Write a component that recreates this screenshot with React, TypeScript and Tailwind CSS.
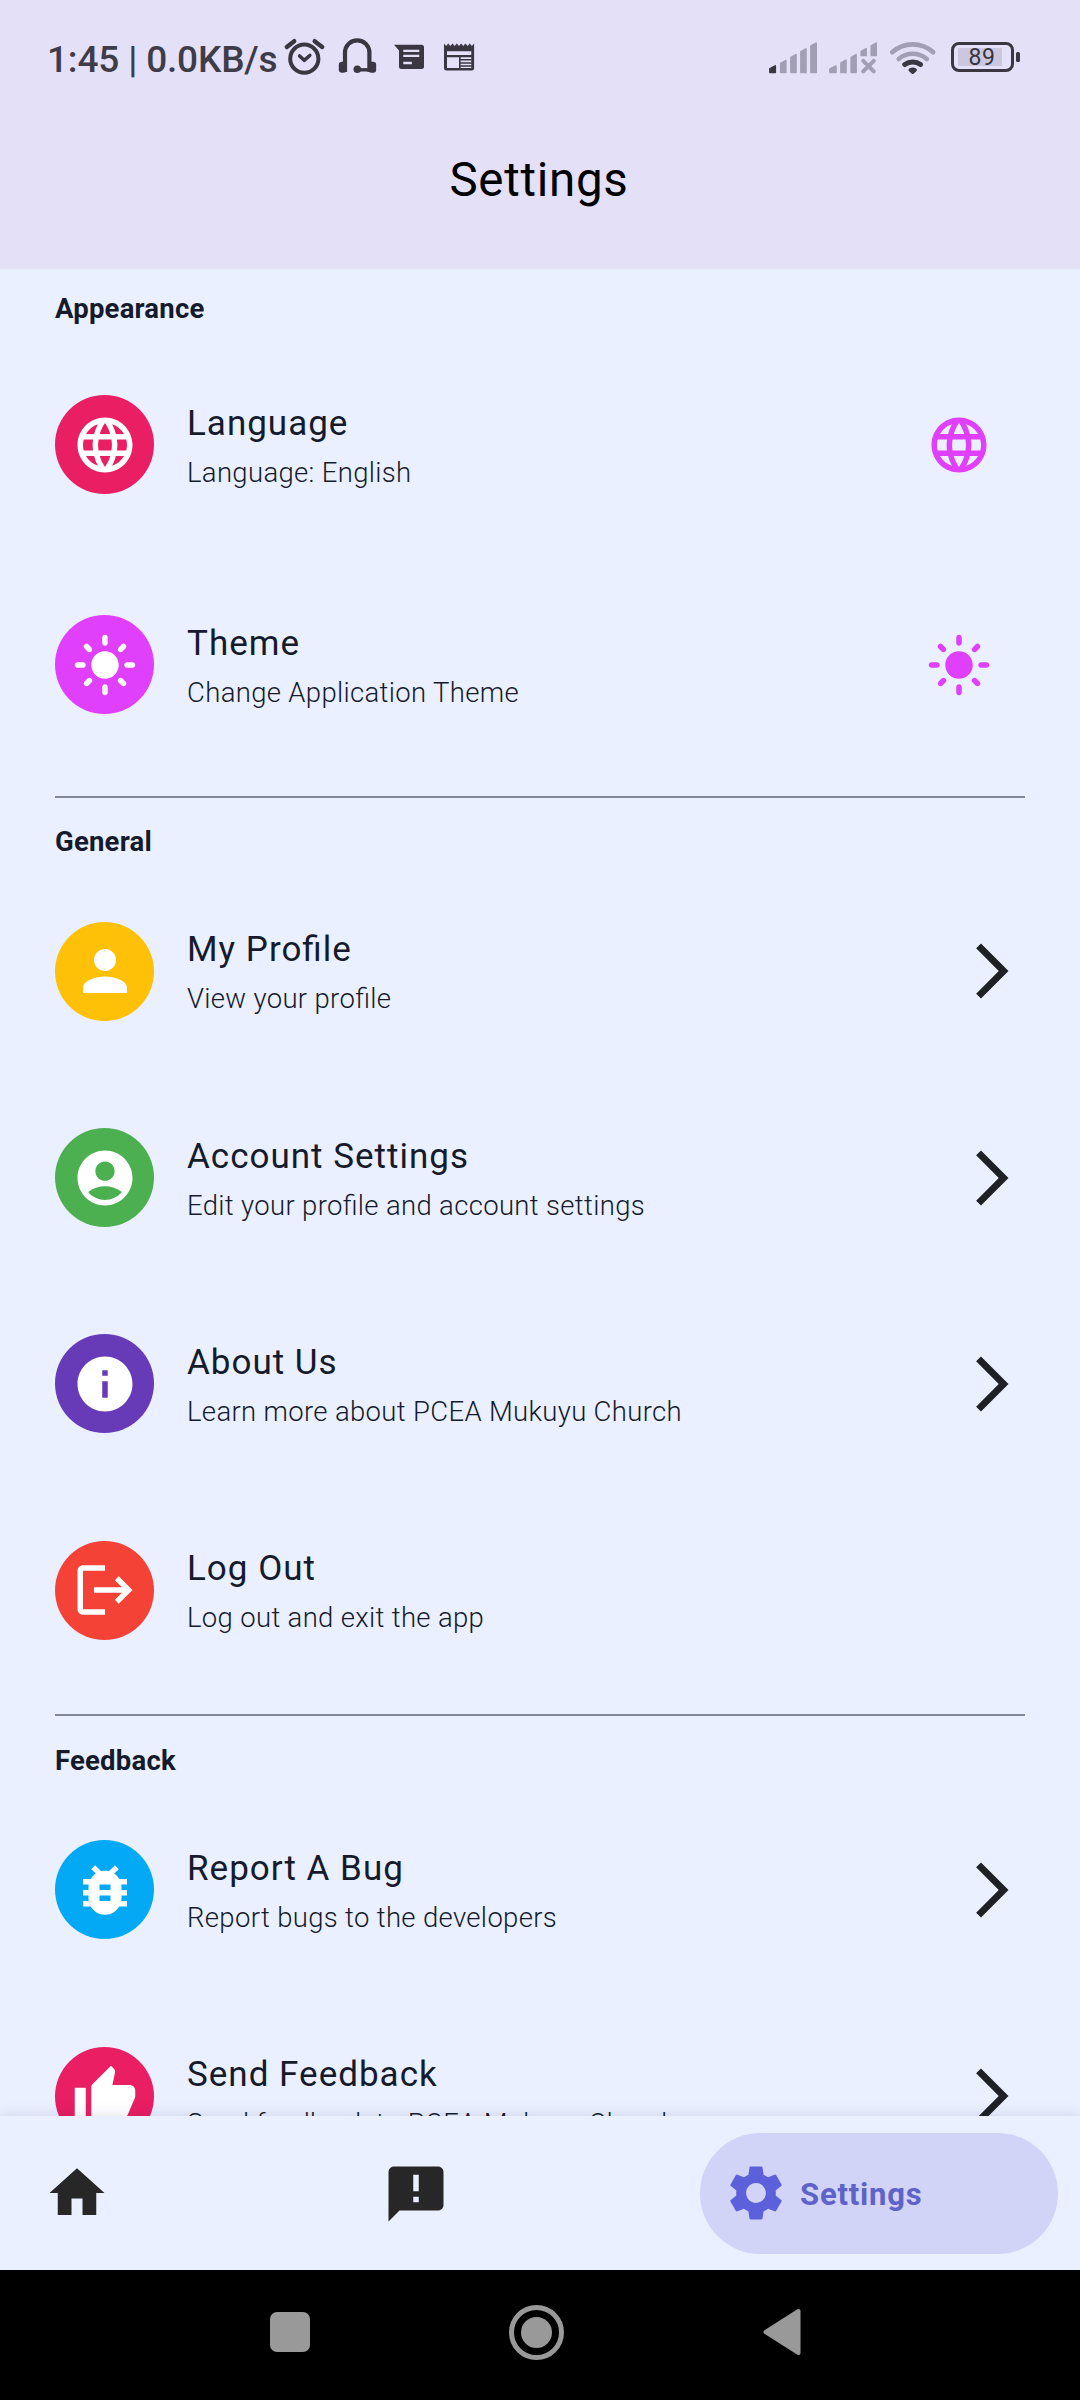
import type { ReactNode } from 'react';
import {
  MdArrowForwardIos,
  MdBugReport,
  MdHome,
  MdInfo,
  MdLanguage,
  MdLightMode,
  MdLogout,
  MdPerson,
  MdSettings,
  MdThumbUp,
} from 'react-icons/md';

const INK = '#3a3743';
const MUTED = '#a29fb4';

function AccountCircle() {
  return (
    <svg viewBox="0 0 24 24" className="size-[66px]" fill="currentColor">
      <path d="M12 2C6.48 2 2 6.48 2 12s4.480 10 10 10 10-4.480 10-10S17.520 2 12 2zm0 4c1.930 0 3.500 1.570 3.500 3.500S13.930 13 12 13s-3.500-1.570-3.500-3.500S10.070 6 12 6zm0 14c-2.030 0-4.430-.820-6.140-2.880a9.947 9.947 0 0 1 12.280 0C16.430 19.180 14.030 20 12 20z" />
    </svg>
  );
}

function Announcement() {
  return (
    <svg viewBox="0 0 24 24" className="size-[66px]" fill="currentColor">
      <path d="M20 2H4c-1.1 0-1.990.9-1.990 2L2 22l4-4h14c1.1 0 2-.9 2-2V4c0-1.1-.9-2-2-2zm-7 9h-2V5h2v6zm0 4h-2v-2h2v2z" />
    </svg>
  );
}

function AlarmIcon() {
  return (
    <svg viewBox="281 38 49 44" className="h-[44px] w-[49px]" fill="none" stroke={INK} strokeLinecap="round" strokeLinejoin="round">
      <circle cx="304.3" cy="58.7" r="14.1" strokeWidth="4" />
      <path d="M286.800 47 294.200 41.200M314.700 41.200 322.200 47" strokeWidth="4.400" />
      <path d="M299.600 56 304.200 60.300 309.800 55.500" strokeWidth="3.6" />
    </svg>
  );
}

function HeadsetIcon() {
  return (
    <svg viewBox="330 38 56 44" className="h-[44px] w-[56px]" fill="none" stroke={INK}>
      <path d="M345 72V52.500a12.200 12.200 0 0 1 24.400 0V72" strokeWidth="4.200" />
      <rect x="338.800" y="61.800" width="7.600" height="11" rx="3.200" fill={INK} stroke="none" />
      <rect x="368.200" y="61.800" width="8" height="11" rx="3.200" fill={INK} stroke="none" />
      <path d="M357 69.800h14" strokeWidth="3.400" />
      <circle cx="357.300" cy="69.300" r="3.800" fill={INK} stroke="none" />
    </svg>
  );
}

function MessageIcon() {
  return (
    <svg viewBox="386 38 48 44" className="h-[44px] w-[48px]">
      <path d="M394 44.700h27.500a2.500 2.500 0 0 1 2.500 2.500v19.300a2.500 2.500 0 0 1-2.500 2.500h-20a2.500 2.500 0 0 1-2.500-2.500V50.500z" fill={INK} />
      <path d="M403.300 50.800h16M403.300 55.800h16M403.300 63h8.600" stroke="#e4e0f7" strokeWidth="2.300" />
    </svg>
  );
}

function NewsIcon() {
  return (
    <svg viewBox="434 38 48 44" className="h-[44px] w-[48px]">
      <path
        d="M444 43.500l2.100 2.600 2.100-2.600 2.200 2.600 2.100-2.600 2.200 2.600 2.100-2.600 2.200 2.600 2.100-2.600 2.200 2.600 2.100-2.600 2.200 2.600 2.100-2.600 2.200 2.600 2.200-2.600V68a2.500 2.500 0 0 1-2.500 2.500h-25A2.500 2.500 0 0 1 444 68z"
        fill={INK}
      />
      <path d="M447 51.300h24.300v3.800H447zM447 57.300h12v10.600h-12zM460.600 57.300h10.700v1.700h-10.700zM460.600 60.600h10.700v1.600h-10.700zM460.600 63.700h10.700v1.500h-10.700zM460.600 66.700h10.700v1.300h-10.700z" fill="#e4e0f7" />
    </svg>
  );
}

function SignalIcon() {
  return (
    <svg viewBox="767 38 56 44" className="h-[44px] w-[56px]" strokeLinejoin="round" strokeWidth="1.8">
      <path d="M770 72.300v-3.500l5.200-2.800v6.300z" fill={INK} stroke={INK} />
      <g fill={MUTED} stroke={MUTED}>
        <path d="M780.800 72.300V63.500l4.900-2.700v11.500zM791 72.300V57.500l4.900-2.700v17.500zM801 72.300V51.700l4.900-2.700v23.300zM811 72.300V46l5.100-2.700v29z" />
      </g>
    </svg>
  );
}

function NoSignalIcon() {
  return (
    <svg viewBox="823 38 62 44" className="h-[44px] w-[62px]" fill={MUTED} stroke={MUTED} strokeLinejoin="round" strokeWidth="1.8">
      <path d="M830 72.300v-3.200l5.900-3v6.200zM841 72.300V63l4.900-2.700v12zM851.300 72.300V57.500l4.700-2.700v17.500zM861.300 55.400v-3.900l4.800-2.700v6.600zM871.300 55.400V46l4.800-2.700v12.100z" />
      <path d="M863.200 60.800 873.800 71.300M873.800 60.800 863.200 71.300" strokeWidth="4" strokeLinecap="round" />
    </svg>
  );
}

function WifiIcon() {
  return (
    <svg viewBox="885 38 66 44" className="h-[44px] w-[66px]" fill="none" strokeLinecap="round" strokeWidth="4.6">
      <path d="M892.200 52.300a30.500 30.500 0 0 1 41 0" stroke={MUTED} />
      <path d="M898.700 59a21.500 21.500 0 0 1 28 0" stroke={MUTED} />
      <path d="M904.800 64.600a13 13 0 0 1 15.800 0" stroke={INK} strokeWidth="5" />
      <path d="M910.200 70q2.500-1.600 5 0l-2.500 2.300z" fill={INK} stroke={INK} strokeWidth="3.400" strokeLinejoin="round" />
    </svg>
  );
}

function Battery() {
  return (
    <div className="flex h-[30px] items-center gap-[2px]">
      <div className="flex h-[30px] w-[63px] items-center rounded-[8px] border-[3px] border-[#3a3743] pl-[4px]">
        <div className="flex h-[18px] w-[44px] items-center justify-center bg-[#cbc7df] text-[23px] leading-[26px] tracking-[0.5px] text-[#37343f]">
          <span className="relative top-[1px] pl-[4px]">89</span>
        </div>
      </div>
      <div className="h-[10px] w-[4px] rounded-[1.500px] bg-[#3a3743]" />
    </div>
  );
}

function StatusBar() {
  return (
    <div className="flex h-[82px] items-start pt-[38px] pl-[47px]">
      <div className="w-[234px] text-[37px] leading-[44px] font-medium tracking-[-0.18px] whitespace-nowrap text-[#3f3c49]">
        1:45 | 0.0KB/s
      </div>
      <AlarmIcon />
      <HeadsetIcon />
      <MessageIcon />
      <NewsIcon />
      <div className="w-[285px]" />
      <SignalIcon />
      <NoSignalIcon />
      <WifiIcon />
      <div className="pt-[4px]">
        <Battery />
      </div>
    </div>
  );
}

type RowProps = {
  color: string;
  icon: ReactNode;
  title: string;
  subtitle: string;
  trailing?: ReactNode;
  height?: string;
};

function Row({ color, icon, title, subtitle, trailing, height = 'h-[206.25px]' }: RowProps) {
  return (
    <div className={`flex shrink-0 items-center ${height}`}>
      <div className={`flex size-[99px] items-center justify-center rounded-full text-white ${color}`}>{icon}</div>
      <div className="ml-[33px] h-[99px] flex-1 pt-[6.5px] whitespace-nowrap text-[#151b2c] [font-feature-settings:'liga'_1]">
        <div className="text-[35px] leading-[44px] tracking-[1px]">{title}</div>
        <div className="mt-[5px] text-[27.5px] leading-[44px] font-light tracking-[0.33px]">{subtitle}</div>
      </div>
      {trailing}
    </div>
  );
}

function Heading({ children }: { children: ReactNode }) {
  return (
    <div className="mb-[4px] shrink-0 text-[27.5px] leading-[44px] font-bold tracking-[0.2px] text-[#151b2c]">{children}</div>
  );
}

function Divider() {
  return <div className="mt-[21px] mb-[22.5px] h-[2px] shrink-0 bg-[#7f8799]" />;
}

const chevron = <MdArrowForwardIos className="size-[66px] text-[#1d2124]" />;

export default function App() {
  return (
    <div className="flex h-[2400px] w-[1080px] flex-col overflow-hidden bg-[#eaf0ff] font-['Roboto',sans-serif]">
      <header className="h-[269px] shrink-0 bg-[#e4e0f7]">
        <StatusBar />
        <h1 className="pt-[68px] pr-[2px] text-center text-[47.5px] leading-[60px] tracking-[0.7px] text-black">Settings</h1>
      </header>

      <main className="flex h-[1847px] shrink-0 flex-col overflow-hidden px-[55px] pt-[17.75px]">
        <Heading>Appearance</Heading>
        <Row
          height="h-[220px]"
          color="bg-[#e91e63]"
          icon={<MdLanguage className="size-[66px]" />}
          title="Language"
          subtitle="Language: English"
          trailing={<MdLanguage className="mr-[33px] size-[66px] text-[#e040fb]" />}
        />
        <Row
          height="h-[220px]"
          color="bg-[#e040fb]"
          icon={<MdLightMode className="size-[66px]" />}
          title="Theme"
          subtitle="Change Application Theme"
          trailing={<MdLightMode className="mr-[33px] size-[66px] text-[#e040fb]" />}
        />
        <Divider />
        <Heading>General</Heading>
        <Row color="bg-[#ffc107]" icon={<MdPerson className="size-[66px]" />} title="My Profile" subtitle="View your profile" trailing={chevron} />
        <Row color="bg-[#4caf50]" icon={<AccountCircle />} title="Account Settings" subtitle="Edit your profile and account settings" trailing={chevron} />
        <Row color="bg-[#673ab7]" icon={<MdInfo className="size-[66px]" />} title="About Us" subtitle="Learn more about PCEA Mukuyu Church" trailing={chevron} />
        <Row color="bg-[#f44336]" icon={<MdLogout className="size-[66px]" />} title="Log Out" subtitle="Log out and exit the app" />
        <Divider />
        <Heading>Feedback</Heading>
        <Row color="bg-[#03a9f4]" icon={<MdBugReport className="size-[66px]" />} title="Report A Bug" subtitle="Report bugs to the developers" trailing={chevron} />
        <Row color="bg-[#e91e63]" icon={<MdThumbUp className="size-[66px]" />} title="Send Feedback" subtitle="Send feedback to PCEA Mukuyu Church" trailing={chevron} />
      </main>

      <nav className="relative flex h-[154px] shrink-0 items-center justify-between bg-[#eaf0ff] pr-[22px] pl-[44px] text-[#272727] shadow-[0_0_14px_rgba(30,40,80,0.14)]">
        <MdHome className="size-[66px]" />
        <div className="pt-px pl-[22px]">
          <Announcement />
        </div>
        <div className="flex h-[121px] w-[358px] items-center rounded-full bg-[#d1d4f6] pl-[23px] text-[#5c60db]">
          <MdSettings className="size-[66px]" />
          <span className="ml-[11px] pt-[3px] text-[31px] leading-[44px] font-bold tracking-[0.8px] text-[#5f62c9]">Settings</span>
        </div>
      </nav>

      <div className="relative flex h-[130px] shrink-0 items-center bg-black pb-[6px] pl-[270px]">
        <div className="size-[40px] rounded-[7px] bg-[#999999]" />
        <div className="ml-[199px] flex size-[55px] items-center justify-center rounded-full border-[5px] border-[#999999]">
          <div className="size-[31px] rounded-full bg-[#999999]" />
        </div>
        <svg viewBox="0 0 38 48" className="ml-[199px] h-[48px] w-[38px]" fill="#999999" stroke="#999999" strokeWidth="4" strokeLinejoin="round">
          <path d="M2.500 24 35.500 3v42z" />
        </svg>
      </div>
    </div>
  );
}
